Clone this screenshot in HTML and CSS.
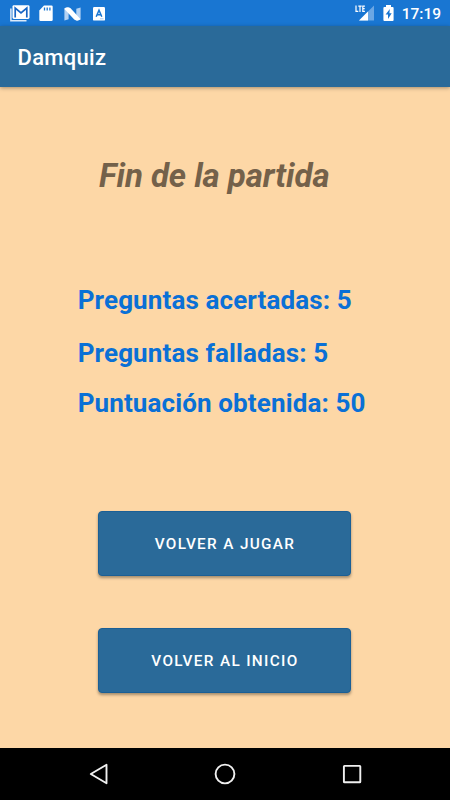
FILE: index.html
```html
<!DOCTYPE html>
<html lang="es">
<head>
  <meta charset="UTF-8">
  <meta name="viewport" content="width=device-width, initial-scale=1.0">
  <title>Damquiz</title>
  <link rel="stylesheet" href="styles.css">
</head>
<body>
<div class="status-bar">
  <div class="notifications">
    <svg class="icon-mail" width="20" height="18" viewBox="0 0 20 18">
      <path d="M.9 3.5v12.2h15.6" fill="none" stroke="#dceafa" stroke-width="1.5"/>
      <rect x="2.5" y=".2" width="17" height="13.8" rx="1.4" fill="#fff"/>
      <path d="M5.2 12.6V3l5.8 4.8L16.8 3v9.6" fill="none" stroke="#1664c4" stroke-width="1.7"/>
    </svg>
    <svg class="icon-sd" width="14" height="17" viewBox="0 0 14 17">
      <path d="M5 .5h7.5q1.2 0 1.2 1.2v13.1q0 1.2-1.2 1.2h-11Q.3 16 .3 14.8V5.5z" fill="#fff"/>
      <path d="M5.5 2.4v3.2M8.2 2.4v3.2M10.9 2.4v3.2" stroke="#1976d2" stroke-width="1.3"/>
    </svg>
    <svg class="icon-n" width="17" height="14" viewBox="0 0 17 14">
      <path d="M.4 1.7L4.6.4v11.9L.4 13.6zM12.3 1.7L16.6.4v11.9l-4.3 1.3z" fill="#b4d2f3"/>
      <path d="M.2 1.7Q3.5-1 6.6 1.3l10 11q-3.3 2.6-6.4.3z" fill="#fff"/>
    </svg>
    <svg class="icon-a" width="12" height="14" viewBox="0 0 12 14">
      <rect width="12" height="13.6" rx="1.2" fill="#fff"/>
      <path d="M3.2 9.8L6 3.2l2.8 6.6M4.2 7.7h3.6" fill="none" stroke="#1976d2" stroke-width="1.5"/>
      <path d="M7 11.8h3.5" stroke="#a9c9ef" stroke-width="1"/>
    </svg>
  </div>
  <div class="system">
    <svg class="icon-signal" width="20" height="17" viewBox="0 0 20 17">
      <path d="M19 .5v15H4z" fill="#6ba7e4"/>
      <path d="M13 6.5v9H4z" fill="#fff"/>
      <path d="M0 0h10.5v8H0z" fill="#1976d2"/>
      <path d="M1 .6v5.8h2.3M3.3 1.1h3.4M5 1.1v5.9M9.9 1.1H7.8v5.3h2.1M7.8 3.7h1.9" fill="none" stroke="#fff" stroke-width="1.2"/>
    </svg>
    <svg class="icon-battery" width="11" height="17" viewBox="0 0 11 17">
      <path d="M3 0h5v2h1.6q1 0 1 1v12q0 1-1 1H1.4q-1 0-1-1V3q0-1 1-1H3z" fill="#fff"/>
      <path d="M6.8 4L2.6 9.6H5V14l3.7-5.8H6.4z" fill="#1976d2"/>
    </svg>
    <span class="clock">17:19</span>
  </div>
</div>
<header class="app-bar">
  <h1>Damquiz</h1>
</header>
<main>
  <h2>Fin de la partida</h2>
  <div class="results">
    <p>Preguntas acertadas: 5</p>
    <p>Preguntas falladas: 5</p>
    <p>Puntuación obtenida: 50</p>
  </div>
  <div class="actions">
    <button type="button">VOLVER A JUGAR</button>
    <button type="button">VOLVER AL INICIO</button>
  </div>
</main>
<nav class="nav-bar">
  <svg width="20" height="22" viewBox="0 0 20 22">
    <path d="M17.5 1.7v18.6L1.8 11z" fill="none" stroke="#f0f0f0" stroke-width="1.9" stroke-linejoin="round"/>
  </svg>
  <svg width="22" height="22" viewBox="0 0 22 22">
    <circle cx="11" cy="11" r="9.4" fill="none" stroke="#f0f0f0" stroke-width="1.9"/>
  </svg>
  <svg width="20" height="20" viewBox="0 0 20 20">
    <rect x="1.9" y="1.9" width="16.4" height="16.4" rx=".6" fill="none" stroke="#f0f0f0" stroke-width="1.9"/>
  </svg>
</nav>
</body>
</html>
```

FILE: styles.css
```css
:root {
  --status-color: #1976d2;
  --primary-color: #2a6a99;
  --background-color: #fdd7a6;
  --result-color: #0a70d6;
  --title-color: #74614a;
}

body {
  display: flex;
  flex-direction: column;
  height: 800px;
  margin: 0;
  overflow: hidden;
  background-color: var(--background-color);
  font-family: Roboto, "Liberation Sans", sans-serif;
}

h1, h2, p {
  margin: 0;
}

svg {
  display: block;
  flex: none;
}

.status-bar {
  display: flex;
  justify-content: space-between;
  box-sizing: border-box;
  height: 26px;
  padding: 5px 9px 0 10px;
  background-color: var(--status-color);
}

.notifications, .system {
  display: flex;
  align-items: flex-start;
}

.icon-sd {
  margin-left: 9px;
}

.icon-n {
  margin: 2px 0 0 11px;
}

.icon-a {
  margin: 2px 0 0 12px;
}

.icon-battery {
  margin-left: 8px;
}

.clock {
  margin-left: 8px;
  color: #fff;
  font-size: 15.5px;
  font-weight: 500;
  line-height: 18px;
}

.app-bar {
  display: flex;
  align-items: center;
  flex: none;
  box-sizing: border-box;
  height: 61px;
  padding: 2px 17px 0 17.5px;
  background-color: var(--primary-color);
  box-shadow: 0 1px 4px rgba(0, 0, 0, 0.35);
}

.app-bar h1 {
  color: #fff;
  font-size: 22px;
  font-weight: 500;
  letter-spacing: 0.3px;
}

main {
  flex: 1;
}

h2 {
  margin: 69px 0 0 99px;
  color: var(--title-color);
  font-size: 33px;
  font-style: italic;
  font-weight: 700;
  letter-spacing: -0.05px;
  line-height: 40px;
}

.results {
  display: flex;
  flex-direction: column;
  margin: 88px 0 0 77.7px;
  color: var(--result-color);
  font-size: 26px;
  font-weight: 700;
  letter-spacing: 0.12px;
  line-height: 32px;
}

.results p + p {
  margin-top: 21px;
}

.results p:last-child {
  margin-top: 18px;
}

.actions {
  display: flex;
  flex-direction: column;
  gap: 52px;
  margin: 92px 0 0 98px;
}

button {
  width: 253px;
  height: 65px;
  padding: 0 0 0 1px;
  border: 1px solid #1b5f95;
  border-radius: 4px;
  background-color: var(--primary-color);
  box-shadow: 0 2px 3px rgba(0, 0, 0, 0.35);
  color: #fff;
  font-family: inherit;
  font-size: 15.3px;
  font-weight: 500;
  letter-spacing: 1.35px;
}

.nav-bar {
  display: flex;
  align-items: center;
  justify-content: space-between;
  flex: none;
  box-sizing: border-box;
  height: 52px;
  padding: 0 88.5px;
  background-color: #000;
}
```
